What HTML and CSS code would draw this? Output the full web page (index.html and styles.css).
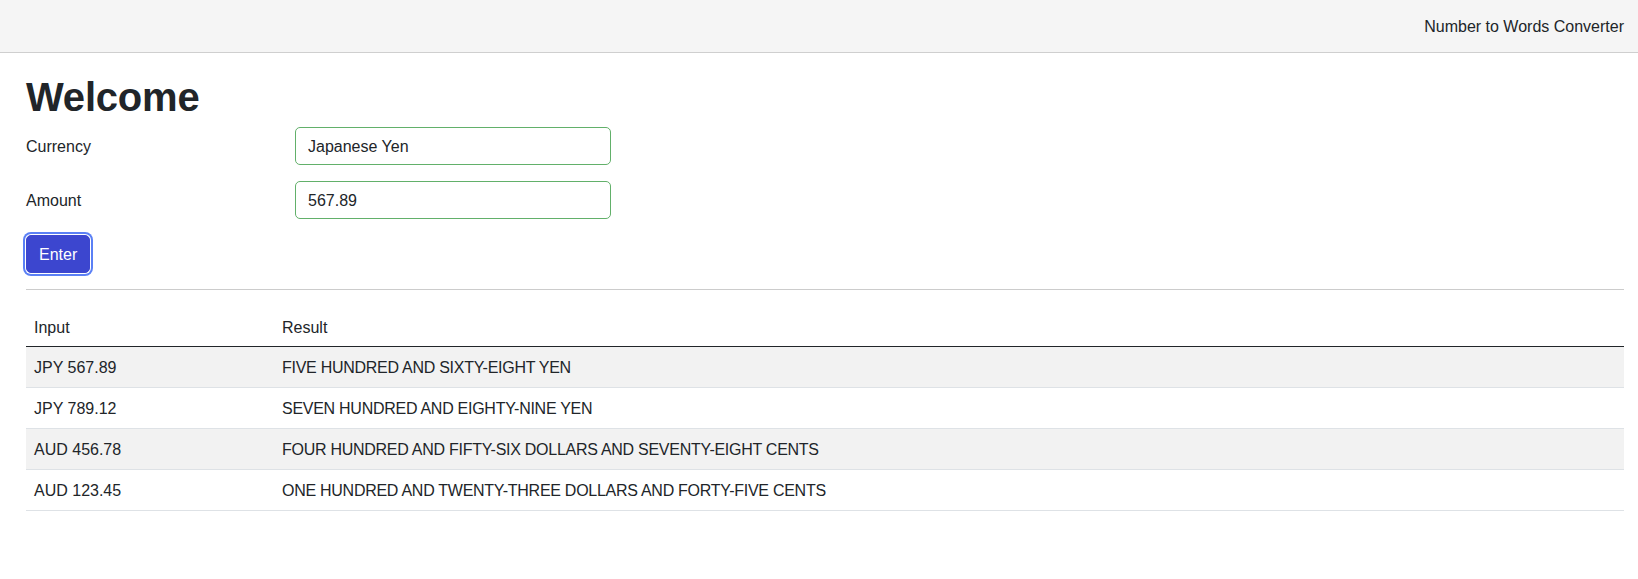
FILE: index.html
```html
<!DOCTYPE html>
<html lang="en">
<head>
<meta charset="utf-8">
<title>Number to Words Converter</title>
<link rel="stylesheet" href="styles.css">
</head>
<body>
<header class="topbar">
  <span class="brand">Number to Words Converter</span>
</header>
<main class="page">
  <h1 class="title">Welcome</h1>
  <form class="form">
    <div class="form-row">
      <label class="form-label" for="currency">Currency</label>
      <input class="form-control" id="currency" type="text" value="Japanese Yen">
    </div>
    <div class="form-row">
      <label class="form-label" for="amount">Amount</label>
      <input class="form-control" id="amount" type="text" value="567.89">
    </div>
    <button class="btn" type="button">Enter</button>
  </form>
  <hr class="divider">
  <table class="results">
    <thead>
      <tr><th class="col-input">Input</th><th>Result</th></tr>
    </thead>
    <tbody>
      <tr class="striped"><td>JPY 567.89</td><td class="words">FIVE HUNDRED AND SIXTY-EIGHT YEN</td></tr>
      <tr><td>JPY 789.12</td><td class="words">SEVEN HUNDRED AND EIGHTY-NINE YEN</td></tr>
      <tr class="striped"><td>AUD 456.78</td><td class="words">FOUR HUNDRED AND FIFTY-SIX DOLLARS AND SEVENTY-EIGHT CENTS</td></tr>
      <tr><td>AUD 123.45</td><td class="words">ONE HUNDRED AND TWENTY-THREE DOLLARS AND FORTY-FIVE CENTS</td></tr>
    </tbody>
  </table>
</main>
</body>
</html>
```
FILE: styles.css
```css
* { box-sizing: border-box; }
html, body { margin: 0; padding: 0; }
body {
  font-family: "Liberation Sans", Arial, Helvetica, sans-serif;
  font-size: 16px;
  line-height: 1.5;
  color: #212529;
  background: #fff;
}
.topbar {
  height: 53px;
  background: #f5f5f5;
  border-bottom: 1px solid #cfcfcf;
  display: flex;
  align-items: center;
  justify-content: flex-end;
  padding: 2px 14px 0 26px;
}
.brand { font-size: 16px; color: #212529; }
.page { padding: 20px 14px 0 26px; }
.title {
  margin: 0 0 6px 0;
  font-size: 40px;
  line-height: 48px;
  font-weight: 700;
  letter-spacing: -0.2px;
}
.form { display: flex; flex-direction: column; align-items: flex-start; }
.form-row {
  display: flex;
  align-items: center;
  margin-bottom: 16px;
}
.form-label { width: 269px; padding-top: 2px; }
.form-control {
  width: 316px;
  height: 38px;
  padding: 7px 12px 5px 12px;
  font-family: inherit;
  font-size: 16px;
  color: #212529;
  border: 1px solid #62b06a;
  border-radius: 5px;
  background: #fff;
  outline: none;
}
.btn {
  height: 38px;
  padding: 1px 12px 0 12px;
  font-family: inherit;
  font-size: 16px;
  color: #fff;
  background: #3c46cf;
  border: 1px solid #3c46cf;
  border-radius: 5px;
  box-shadow: 0 0 0 1px #fff, 0 0 0 3px #5b80f5;
}
.divider {
  margin: 16px 0 16px 0;
  border: 0;
  border-top: 1px solid #cccccc;
}
.results {
  width: 100%;
  border-collapse: collapse;
}
.results th, .results td {
  text-align: left;
  font-weight: 400;
  padding: 9px 8px 7px 8px;
  height: 40px;
  border-bottom: 1px solid #dee2e6;
}
.results th { border-bottom: 1px solid #212529; padding-top: 10px; padding-bottom: 6px; }
.col-input { width: 248px; }
.words { letter-spacing: -0.27px; }
.striped td { background: #f2f2f2; }
```
